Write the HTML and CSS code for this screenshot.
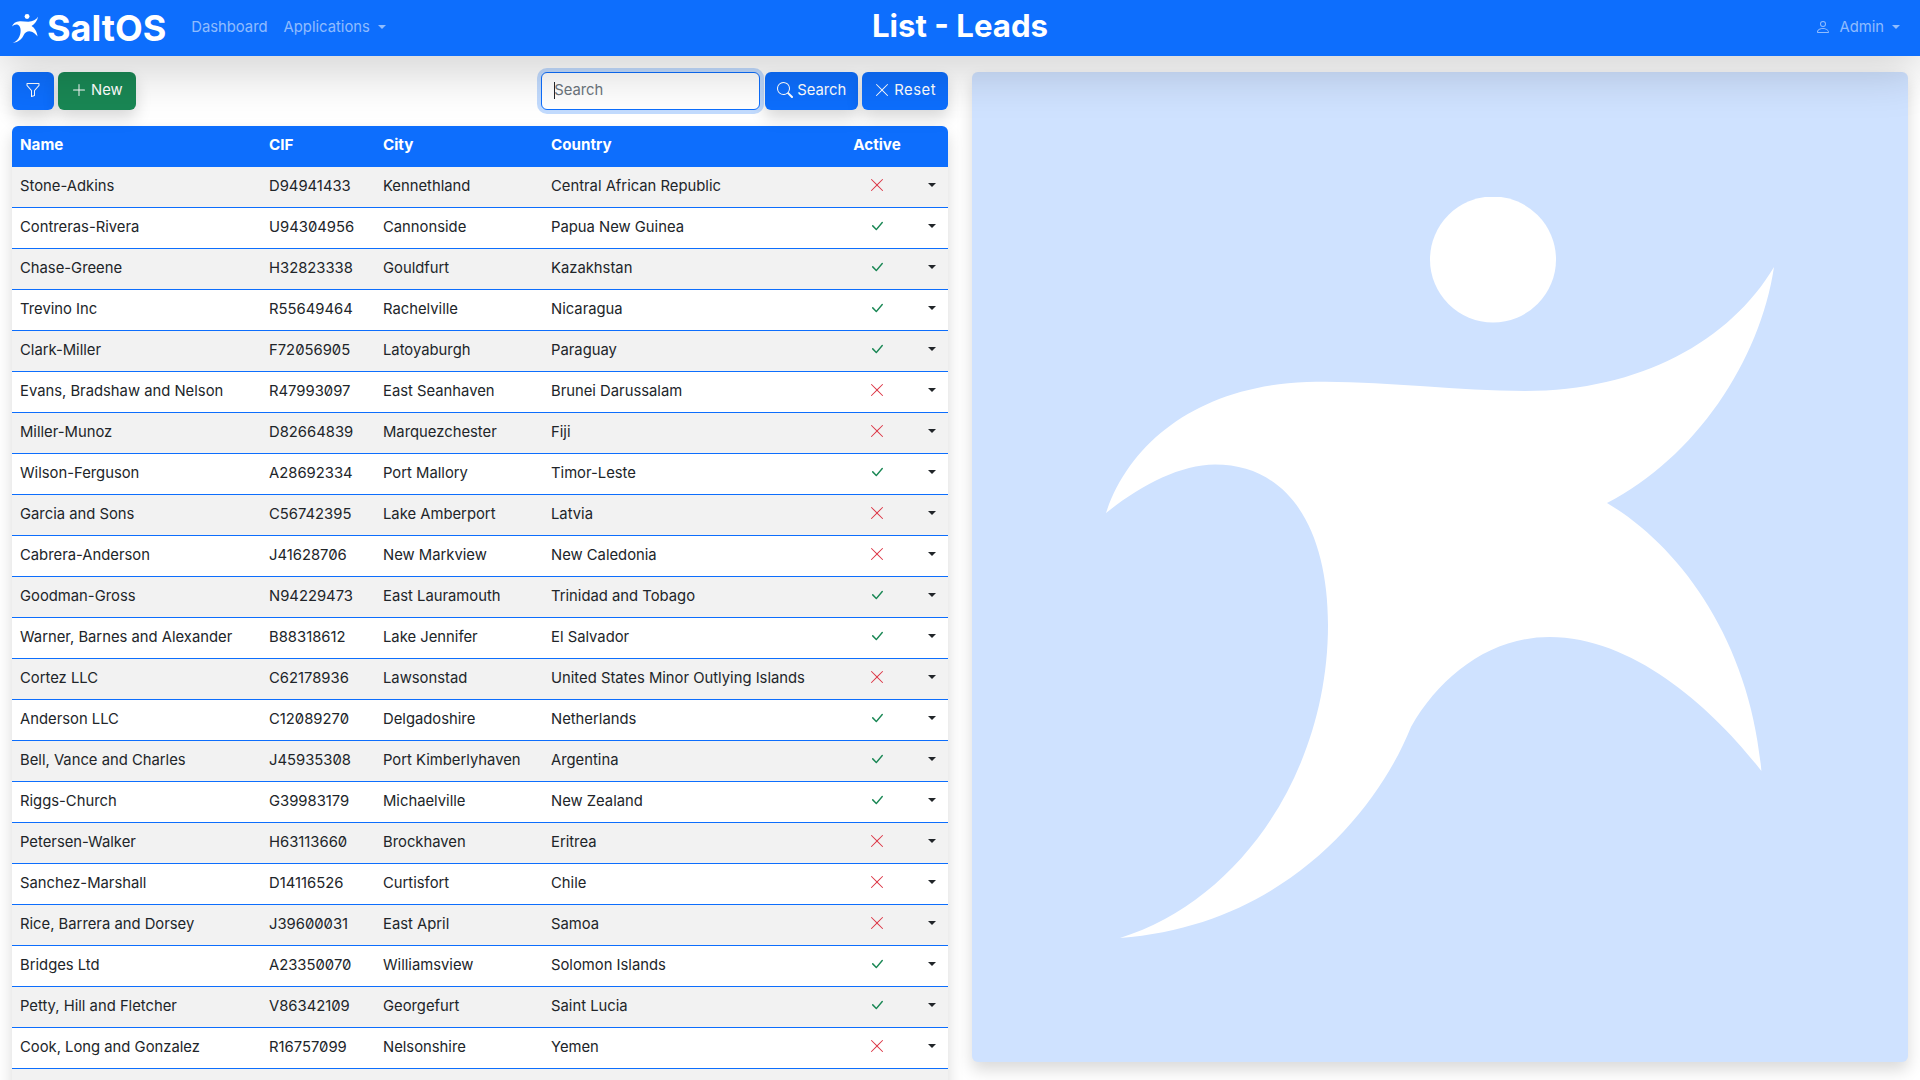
FILE: index.html
```html
<!DOCTYPE html>
<html lang="en">
<head>
<meta charset="utf-8">
<title>List - Leads</title>
<link rel="stylesheet" href="styles.css">
</head>
<body>
<svg class="defs" aria-hidden="true">
  <symbol id="logo" viewBox="1106 196 668 741">
    <circle cx="1493" cy="258.5" r="63"/>
    <path d="M1774 266C1760 360 1695 457 1607 502C1680 545 1750 640 1761.4 770C1715 710 1635 636 1549.6 636C1490 636 1440 675 1411 726C1375 815 1280 925 1120 937C1240 900 1328 770 1328 624C1328 530 1290 463.6 1215 463.6C1180 463.6 1140 485 1106 512C1130 440 1200 385 1307 381C1380 379 1450 390 1525 390C1640 390 1730 340 1774 266Z"/>
  </symbol>
  <symbol id="i-funnel" viewBox="0 0 16 16"><path d="M1.5 1.5A.5.5 0 0 1 2 1h12a.5.5 0 0 1 .5.5v2a.5.5 0 0 1-.128.334L10 8.692V13.5a.5.5 0 0 1-.342.474l-3 1A.5.5 0 0 1 6 14.5V8.692L1.628 3.834A.5.5 0 0 1 1.5 3.5v-2zm1 .5v1.308l4.372 4.858A.5.5 0 0 1 7 8.5v5.306l2-.666V8.5a.5.5 0 0 1 .128-.334L13.5 3.308V2h-11z"/></symbol>
  <symbol id="i-plus" viewBox="0 0 16 16"><path fill-rule="evenodd" d="M8 2a.5.5 0 0 1 .5.5v5h5a.5.5 0 0 1 0 1h-5v5a.5.5 0 0 1-1 0v-5h-5a.5.5 0 0 1 0-1h5v-5A.5.5 0 0 1 8 2Z"/></symbol>
  <symbol id="i-search" viewBox="0 0 16 16"><path d="M11.742 10.344a6.5 6.5 0 1 0-1.397 1.398h-.001c.03.04.062.078.098.115l3.85 3.85a1 1 0 0 0 1.415-1.414l-3.85-3.85a1.007 1.007 0 0 0-.115-.1zM12 6.5a5.5 5.5 0 1 1-11 0 5.5 5.5 0 0 1 11 0z"/></symbol>
  <symbol id="i-x" viewBox="0 0 16 16"><path d="M2.146 2.854a.5.5 0 1 1 .708-.708L8 7.293l5.146-5.147a.5.5 0 0 1 .708.708L8.707 8l5.147 5.146a.5.5 0 0 1-.708.708L8 8.707l-5.146 5.147a.5.5 0 0 1-.708-.708L7.293 8 2.146 2.854Z"/></symbol>
  <symbol id="i-check" viewBox="0 0 16 16"><path d="M12.736 3.97a.733.733 0 0 1 1.047 0c.286.289.29.756.01 1.05L7.88 12.01a.733.733 0 0 1-1.065.02L3.217 8.384a.757.757 0 0 1 0-1.06.733.733 0 0 1 1.047 0l3.052 3.093 5.4-6.425a.247.247 0 0 1 .02-.022Z"/></symbol>
  <symbol id="i-person" viewBox="0 0 16 16"><path d="M8 8a3 3 0 1 0 0-6 3 3 0 0 0 0 6Zm2-3a2 2 0 1 1-4 0 2 2 0 0 1 4 0Zm4 8c0 1-1 1-1 1H3s-1 0-1-1 1-4 6-4 6 4 6 4Zm-1-.004c-.001-.246-.154-.986-.832-1.664C11.516 10.68 10.289 10 8 10c-2.29 0-3.516.68-4.168 1.332-.678.678-.83 1.418-.832 1.664h10Z"/></symbol>
</svg>

<header class="navbar">
  <a class="brand">
    <svg class="brand-mark"><use href="#logo"/></svg>
    <span class="brand-name">SaltOS</span>
  </a>
  <nav class="nav-left">
    <a class="nav-link">Dashboard</a>
    <a class="nav-link">Applications<span class="caret"></span></a>
  </nav>
  <h1 class="page-title">List - Leads</h1>
  <a class="nav-link nav-user"><svg class="icon user-icon"><use href="#i-person"/></svg>Admin<span class="caret"></span></a>
</header>

<main class="content">
  <section class="left">
    <div class="toolbar">
      <div class="group">
        <button class="btn btn-blue btn-icon"><svg class="icon"><use href="#i-funnel"/></svg></button>
        <button class="btn btn-green"><svg class="icon"><use href="#i-plus"/></svg>New</button>
      </div>
      <div class="group">
        <div class="search-input"><span class="cursor"></span><span class="placeholder">Search</span></div>
        <button class="btn btn-blue"><svg class="icon"><use href="#i-search"/></svg>Search</button>
        <button class="btn btn-blue btn-reset"><svg class="icon"><use href="#i-x"/></svg>Reset</button>
      </div>
    </div>
    <table class="table">
      <thead>
        <tr><th class="c-name">Name</th><th class="c-cif">CIF</th><th class="c-city">City</th><th class="c-country">Country</th><th class="c-active">Active</th><th class="c-menu"></th></tr>
      </thead>
      <tbody id="rows"></tbody>
    </table>
  </section>
  <aside class="panel">
    <svg class="hero"><use href="#logo"/></svg>
  </aside>
</main>
<script src="app.js"></script>
</body>
</html>
```

FILE: app.js
```js
var data = [
  ["Stone-Adkins","D94941433","Kennethland","Central African Republic",0],
  ["Contreras-Rivera","U94304956","Cannonside","Papua New Guinea",1],
  ["Chase-Greene","H32823338","Gouldfurt","Kazakhstan",1],
  ["Trevino Inc","R55649464","Rachelville","Nicaragua",1],
  ["Clark-Miller","F72056905","Latoyaburgh","Paraguay",1],
  ["Evans, Bradshaw and Nelson","R47993097","East Seanhaven","Brunei Darussalam",0],
  ["Miller-Munoz","D82664839","Marquezchester","Fiji",0],
  ["Wilson-Ferguson","A28692334","Port Mallory","Timor-Leste",1],
  ["Garcia and Sons","C56742395","Lake Amberport","Latvia",0],
  ["Cabrera-Anderson","J41628706","New Markview","New Caledonia",0],
  ["Goodman-Gross","N94229473","East Lauramouth","Trinidad and Tobago",1],
  ["Warner, Barnes and Alexander","B88318612","Lake Jennifer","El Salvador",1],
  ["Cortez LLC","C62178936","Lawsonstad","United States Minor Outlying Islands",0],
  ["Anderson LLC","C12089270","Delgadoshire","Netherlands",1],
  ["Bell, Vance and Charles","J45935308","Port Kimberlyhaven","Argentina",1],
  ["Riggs-Church","G39983179","Michaelville","New Zealand",1],
  ["Petersen-Walker","H63113660","Brockhaven","Eritrea",0],
  ["Sanchez-Marshall","D14116526","Curtisfort","Chile",0],
  ["Rice, Barrera and Dorsey","J39600031","East April","Samoa",0],
  ["Bridges Ltd","A23350070","Williamsview","Solomon Islands",1],
  ["Petty, Hill and Fletcher","V86342109","Georgefurt","Saint Lucia",1],
  ["Cook, Long and Gonzalez","R16757099","Nelsonshire","Yemen",0]
];
var html = "";
data.forEach(function (r) {
  var icon = r[4]
    ? '<svg class="icon ok"><use href="#i-check"/></svg>'
    : '<svg class="icon no"><use href="#i-x"/></svg>';
  html += "<tr><td>" + r[0] + "</td><td>" + r[1] + "</td><td>" + r[2] + "</td><td>" + r[3] +
    '</td><td class="center">' + icon + '</td><td class="center menu"><span class="caret caret-dark"></span></td></tr>';
});
html += '<tr><td>&nbsp;</td><td></td><td></td><td></td><td></td><td></td></tr>';
document.getElementById("rows").innerHTML = html;
```

FILE: styles.css
```css
* { box-sizing: border-box; }
html, body { height: 100%; overflow: hidden; }
body {
  margin: 0;
  background: #fff;
  color: #212529;
  font-family: Inter, "Liberation Sans", sans-serif;
  font-feature-settings: "zero";
  font-size: 14.8px;
  line-height: 24px;
}
.defs { display: none; }
.icon { width: 16px; height: 16px; fill: currentColor; flex: none; }

.navbar {
  position: relative;
  z-index: 5;
  display: flex;
  align-items: center;
  height: 56px;
  padding: 0 12px;
  background: #0d6efd;
  box-shadow: 0 16px 48px rgba(0,0,0,.175);
}
.brand { display: flex; align-items: center; gap: 11px; color: #fff; }
.brand-mark { width: 26px; height: 29px; fill: #fff; }
.brand-name { font-size: 36px; font-weight: 700; line-height: 40px; margin-left: -2px; }
.nav-left { display: flex; gap: 16px; margin-left: 25px; padding-bottom: 2px; }
.nav-link { display: flex; align-items: center; color: rgba(255,255,255,.55); }
.caret {
  display: inline-block;
  margin-left: 8px;
  border-top: 4.8px solid currentColor;
  border-left: 4.8px solid transparent;
  border-right: 4.8px solid transparent;
}
.page-title {
  position: absolute;
  left: 0; right: 0;
  margin: 0;
  padding-bottom: 4px;
  text-align: center;
  color: #fff;
  font-size: 31.2px;
  line-height: 36px;
  font-weight: 700;
  pointer-events: none;
}
.nav-user { margin-left: auto; margin-right: 8px; padding-bottom: 2px; }
.user-icon { margin-right: 8px; }

.content {
  display: grid;
  grid-template-columns: 936px 936px;
  gap: 24px;
  padding: 16px 12px 18px;
  height: 1024px;
}
.toolbar { display: flex; justify-content: space-between; margin-bottom: 16px; }
.group { display: flex; gap: 4px; }
.btn {
  display: flex;
  align-items: center;
  gap: 4px;
  height: 38px;
  padding: 0 12px 2px;
  border: 0;
  border-radius: 6px;
  font: inherit;
  color: #fff;
  box-shadow: 0 8px 16px rgba(0,0,0,.15);
}
.btn-icon { width: 42px; justify-content: center; }
.btn-blue { background: #0d6efd; }
.btn-green { background: #198754; padding: 0 13px 2px; }
.btn-reset { letter-spacing: .5px; }
.search-input {
  position: relative;
  display: flex;
  align-items: center;
  width: 219px;
  height: 38px;
  margin-right: 1px;
  padding: 0 0 2px 12px;
  border: 1px solid #0d6efd;
  border-radius: 6px;
  background: #fff;
  box-shadow: 0 0 0 4px rgba(13,110,253,.25);
}
.placeholder { color: #6c757d; }
.cursor { width: 1px; height: 17px; margin-right: -1px; background: #212529; }

.table {
  width: 100%;
  table-layout: fixed;
  border-collapse: separate;
  border-spacing: 0;
  box-shadow: 0 8px 16px rgba(0,0,0,.15);
  border-radius: 6px 6px 0 0;
}
.table th {
  height: 41px;
  padding: 6px 8px 10px;
  background: #0d6efd;
  color: #fff;
  font-size: 15.2px;
  font-weight: 700;
  text-align: left;
}
.table th:first-child { border-top-left-radius: 6px; }
.table th:last-child { border-top-right-radius: 6px; }
.c-name { width: 249px; }
.c-cif { width: 114px; }
.c-city { width: 168px; }
.c-country { width: 302px; }
.c-active { width: 64px; }
.table th.c-active { text-align: center; }
.c-menu { width: 39px; }
.table td {
  height: 41px;
  padding: 7px 8px 9px;
  background: #fff;
  border-bottom: 1px solid #0d6efd;
  white-space: nowrap;
  color: #212529;
}
.table tbody tr:nth-child(odd) td { background: #f2f2f2; }
.table td.center { padding: 0 0 4px; text-align: center; }
.table td.menu { padding-left: 6px; }
.table td .icon { display: inline-block; vertical-align: middle; margin-top: -2px; }
.ok { color: #198754; }
.no { color: #dc3545; }
.caret-dark { margin: 0; color: #212529; vertical-align: 3px; }

.panel {
  display: flex;
  align-items: center;
  justify-content: center;
  height: 990px;
  background: #cfe2ff;
  border-radius: 6px;
  box-shadow: 0 8px 16px rgba(0,0,0,.15);
}
.hero { width: 668px; height: 741px; fill: #fff; }
```
